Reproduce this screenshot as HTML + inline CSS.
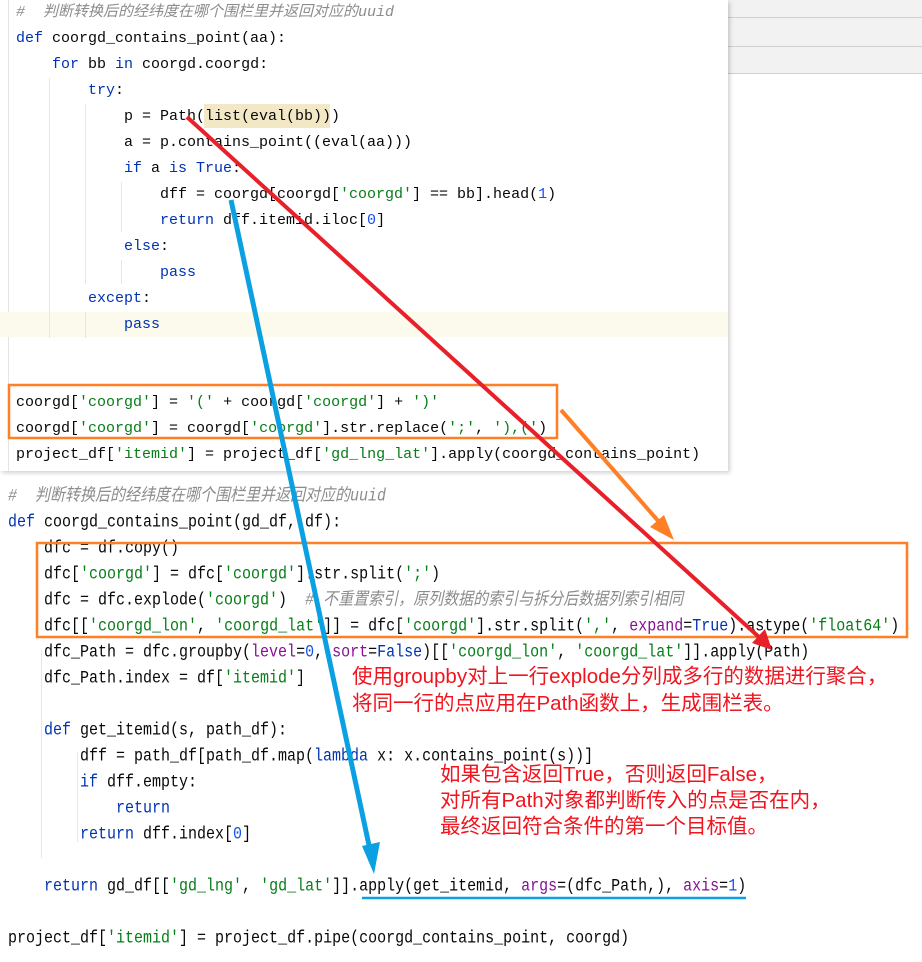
<!DOCTYPE html>
<html><head><meta charset="utf-8"><style>
body{margin:0;width:922px;height:962px;position:relative;background:#fff;overflow:hidden;font-family:"Liberation Mono","Noto Sans CJK SC",monospace;}
.l{position:absolute;white-space:pre;font-size:15px;line-height:20px;color:#080808;}
.b .l{transform:scaleY(1.15);transform-origin:left center;font-size:15px;letter-spacing:0}
.k{color:#0033b3}.s{color:#067d17}.n{color:#1750eb}.c{color:#8c8c8c;font-style:italic}.p{color:#871094}
.cn{position:absolute;font-family:"Liberation Sans","Noto Sans CJK SC",sans-serif;color:#f0141e;font-size:20.5px;white-space:pre;line-height:26px}
</style></head><body>
<div style="position:absolute;left:728px;top:0;width:194px;height:74px;background:#f2f2f2"></div>
<div style="position:absolute;left:728px;top:17px;width:194px;height:1px;background:#d0d0d0"></div>
<div style="position:absolute;left:728px;top:46px;width:194px;height:1px;background:#d0d0d0"></div>
<div style="position:absolute;left:728px;top:73px;width:194px;height:1px;background:#d0d0d0"></div>
<div style="position:absolute;left:0;top:0;width:728px;height:471px;background:#fff;box-shadow:2px 2px 4px rgba(0,0,0,.18)"></div>
<div style="position:absolute;left:8px;top:0;width:1px;height:471px;background:#e4e4e4"></div>
<div style="position:absolute;left:0;top:312px;width:728px;height:25px;background:#fcfaed"></div>
<div style="position:absolute;left:204px;top:104px;width:126px;height:24px;background:#f3e8c6"></div>
<div style="position:absolute;left:49px;top:78px;width:1px;height:260px;background:#e6e6e6"></div>
<div style="position:absolute;left:85px;top:104px;width:1px;height:180px;background:#e6e6e6"></div>
<div style="position:absolute;left:85px;top:312px;width:1px;height:26px;background:#e6e6e6"></div>
<div style="position:absolute;left:121px;top:182px;width:1px;height:50px;background:#e6e6e6"></div>
<div style="position:absolute;left:121px;top:260px;width:1px;height:24px;background:#e6e6e6"></div>

<div class="l c" style="left:16px;top:3px">#  判断转换后的经纬度在哪个围栏里并返回对应的uuid</div>
<div class="l" style="left:16px;top:29px"><span class="k">def</span> coorgd_contains_point(aa):</div>
<div class="l" style="left:52px;top:55px"><span class="k">for</span> bb <span class="k">in</span> coorgd.coorgd:</div>
<div class="l" style="left:88px;top:81px"><span class="k">try</span>:</div>
<div class="l" style="left:124px;top:107px">p = Path(list(eval(bb)))</div>
<div class="l" style="left:124px;top:133px">a = p.contains_point((eval(aa)))</div>
<div class="l" style="left:124px;top:159px"><span class="k">if</span> a <span class="k">is True</span>:</div>
<div class="l" style="left:160px;top:185px">dff = coorgd[coorgd[<span class="s">'coorgd'</span>] == bb].head(<span class="n">1</span>)</div>
<div class="l" style="left:160px;top:211px"><span class="k">return</span> dff.itemid.iloc[<span class="n">0</span>]</div>
<div class="l" style="left:124px;top:237px"><span class="k">else</span>:</div>
<div class="l" style="left:160px;top:263px"><span class="k">pass</span></div>
<div class="l" style="left:88px;top:289px"><span class="k">except</span>:</div>
<div class="l" style="left:124px;top:315px"><span class="k">pass</span></div>
<div class="l" style="left:16px;top:393px">coorgd[<span class="s">'coorgd'</span>] = <span class="s">'('</span> + coorgd[<span class="s">'coorgd'</span>] + <span class="s">')'</span></div>
<div class="l" style="left:16px;top:419px">coorgd[<span class="s">'coorgd'</span>] = coorgd[<span class="s">'coorgd'</span>].str.replace(<span class="s">';'</span>, <span class="s">'),('</span>)</div>
<div class="l" style="left:16px;top:445px">project_df[<span class="s">'itemid'</span>] = project_df[<span class="s">'gd_lng_lat'</span>].apply(coorgd_contains_point)</div>

<div class="b">
<div style="position:absolute;left:41px;top:650px;width:1px;height:208px;background:#e6e6e6"></div>
<div style="position:absolute;left:77px;top:752px;width:1px;height:90px;background:#e6e6e6"></div>
<div class="l c" style="left:8px;top:487px">#  判断转换后的经纬度在哪个围栏里并返回对应的uuid</div>
<div class="l" style="left:8px;top:513px"><span class="k">def</span> coorgd_contains_point(gd_df, df):</div>
<div class="l" style="left:44px;top:539px">dfc = df.copy()</div>
<div class="l" style="left:44px;top:565px">dfc[<span class="s">'coorgd'</span>] = dfc[<span class="s">'coorgd'</span>].str.split(<span class="s">';'</span>)</div>
<div class="l" style="left:44px;top:591px">dfc = dfc.explode(<span class="s">'coorgd'</span>)  <span class="c"># 不重置索引，原列数据的索引与拆分后数据列索引相同</span></div>
<div class="l" style="left:44px;top:617px">dfc[[<span class="s">'coorgd_lon'</span>, <span class="s">'coorgd_lat'</span>]] = dfc[<span class="s">'coorgd'</span>].str.split(<span class="s">','</span>, <span class="p">expand</span>=<span class="k">True</span>).astype(<span class="s">'float64'</span>)</div>
<div class="l" style="left:44px;top:643px">dfc_Path = dfc.groupby(<span class="p">level</span>=<span class="n">0</span>, <span class="p">sort</span>=<span class="k">False</span>)[[<span class="s">'coorgd_lon'</span>, <span class="s">'coorgd_lat'</span>]].apply(Path)</div>
<div class="l" style="left:44px;top:669px">dfc_Path.index = df[<span class="s">'itemid'</span>]</div>
<div class="l" style="left:44px;top:721px"><span class="k">def</span> get_itemid(s, path_df):</div>
<div class="l" style="left:80px;top:747px">dff = path_df[path_df.map(<span class="k">lambda</span> x: x.contains_point(s))]</div>
<div class="l" style="left:80px;top:773px"><span class="k">if</span> dff.empty:</div>
<div class="l" style="left:116px;top:799px"><span class="k">return</span></div>
<div class="l" style="left:80px;top:825px"><span class="k">return</span> dff.index[<span class="n">0</span>]</div>
<div class="l" style="left:44px;top:877px"><span class="k">return</span> gd_df[[<span class="s">'gd_lng'</span>, <span class="s">'gd_lat'</span>]].apply(get_itemid, <span class="p">args</span>=(dfc_Path,), <span class="p">axis</span>=<span class="n">1</span>)</div>
<div class="l" style="left:8px;top:929px">project_df[<span class="s">'itemid'</span>] = project_df.pipe(coorgd_contains_point, coorgd)</div>
</div>

<div class="cn" style="left:352px;top:664px">使用groupby对上一行explode分列成多行的数据进行聚合，</div>
<div class="cn" style="left:352px;top:691px">将同一行的点应用在Path函数上，生成围栏表。</div>
<div class="cn" style="left:440px;top:762px">如果包含返回True，否则返回False，</div>
<div class="cn" style="left:440px;top:788px">对所有Path对象都判断传入的点是否在内，</div>
<div class="cn" style="left:440px;top:814px">最终返回符合条件的第一个目标值。</div>

<svg width="922" height="962" style="position:absolute;left:0;top:0">
<rect x="9" y="385" width="548" height="53" fill="none" stroke="#ff7f27" stroke-width="2.5"/>
<rect x="37" y="543" width="870" height="94" fill="none" stroke="#ff7f27" stroke-width="2.5"/>
<line x1="561" y1="410" x2="660" y2="523" stroke="#ff7f27" stroke-width="4"/>
<polygon points="674,540 650,527 664,515" fill="#ff7f27"/>
<line x1="187" y1="117" x2="760" y2="638" stroke="#e8202a" stroke-width="4"/>
<polygon points="772,650 752,643 765,629" fill="#e8202a"/>
<line x1="231" y1="200" x2="370" y2="850" stroke="#0aa0e2" stroke-width="5"/>
<polygon points="374,874 362,846 380,842" fill="#0aa0e2"/>
<line x1="362" y1="898" x2="746" y2="898" stroke="#0aa0e2" stroke-width="2.5"/>
</svg>
</body></html>
